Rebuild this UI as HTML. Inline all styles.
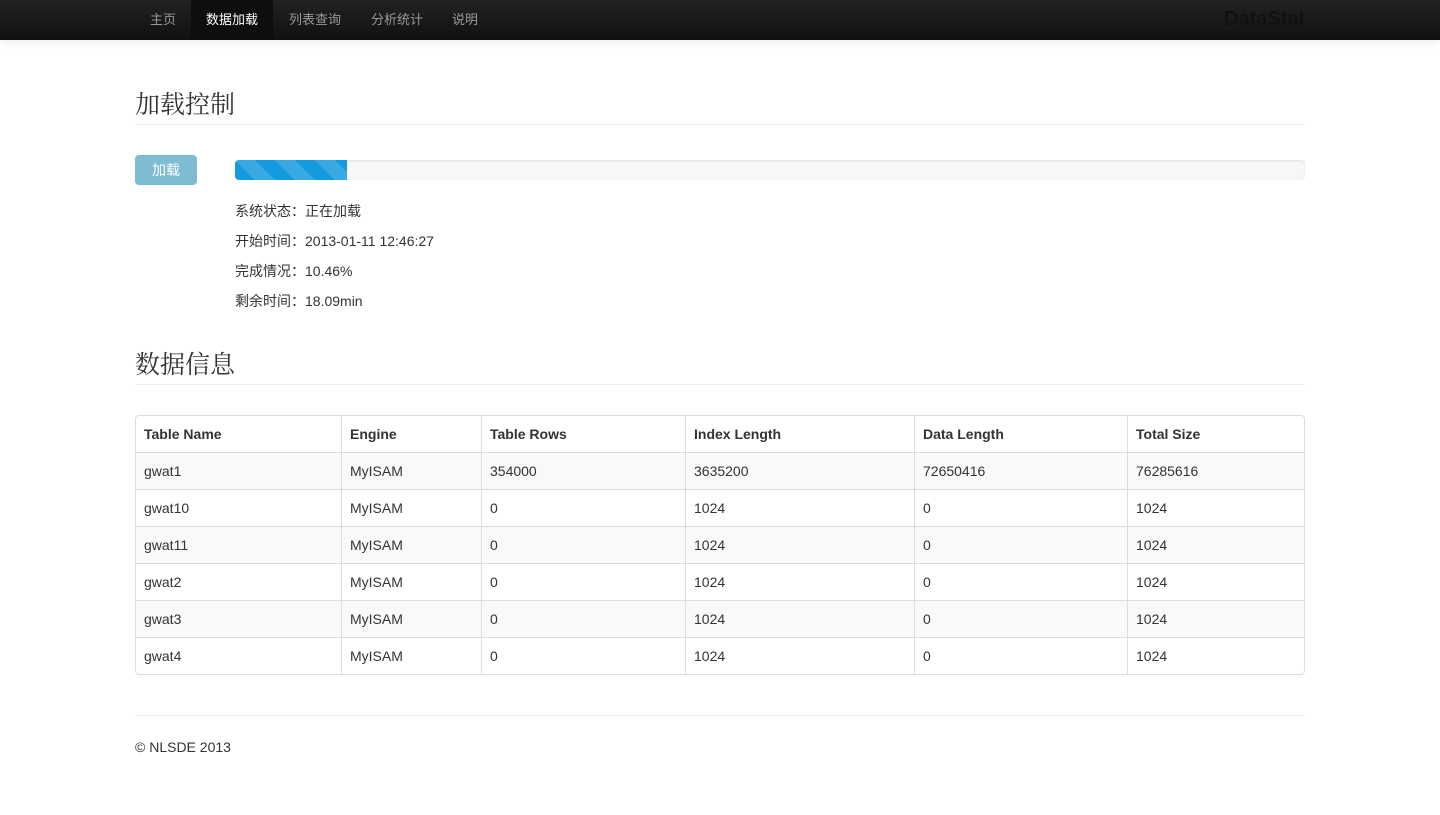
<!DOCTYPE html>
<html><head><meta charset="utf-8"><style>
body{margin:0;font-family:"Liberation Sans","Noto Sans CJK SC",sans-serif;font-size:14px;color:#333;background:#fff;}
.nav{height:40px;background:linear-gradient(#222,#111);box-shadow:0 1px 10px rgba(0,0,0,.1);position:relative;}
.nav a{position:absolute;top:0;height:40px;line-height:40px;color:#999;font-size:13px;text-decoration:none;}
.nav .act{background:#0e0e0e;color:#fff;}
.brand{position:absolute;left:1224px;top:8px;font-size:20px;font-weight:bold;color:#111;}
.c{position:absolute;left:135px;width:1170px;}
h2{margin:0;font-family:"Liberation Serif","Noto Serif CJK SC",serif;font-size:25px;font-weight:normal;}
hr{border:0;border-top:1px solid #eee;margin:0;}
.btn{position:absolute;left:135px;top:155px;width:62px;height:30px;background:#7dbcd2;border-radius:4px;color:#fff;text-align:center;line-height:30px;font-size:14px;border:0;box-sizing:border-box;}
.bar{position:absolute;left:235px;top:160px;width:1070px;height:20px;background:#f7f7f7;border-radius:4px;overflow:hidden;box-shadow:inset 0 1px 2px rgba(0,0,0,.1);}
.bar div{width:112px;height:20px;background-color:#149bdf;background-image:linear-gradient(45deg,rgba(255,255,255,.15) 25%,transparent 25%,transparent 50%,rgba(255,255,255,.15) 50%,rgba(255,255,255,.15) 75%,transparent 75%);background-size:40px 40px;}
.info{position:absolute;left:235px;font-size:14px;}
table{position:absolute;left:135px;top:415px;width:1170px;border-collapse:separate;border-spacing:0;border:1px solid #ddd;border-radius:4px;font-size:14px;}
td,th{height:36px;padding:0 8px;text-align:left;border-top:1px solid #ddd;border-left:1px solid #ddd;}
th{border-top:0;}
td:first-child,th:first-child{border-left:0;}
tr:nth-child(even) td{background:#f9f9f9;}
</style></head><body>
<div class="nav">
<a style="left:135px;padding:0 15px">主页</a>
<a class="act" style="left:191px;padding:0 15px">数据加载</a>
<a style="left:274px;padding:0 15px">列表查询</a>
<a style="left:356px;padding:0 15px">分析统计</a>
<a style="left:437px;padding:0 15px">说明</a>
<div class="brand">DataStat</div>
</div>
<div class="c" style="top:85px"><h2>加载控制</h2></div>
<div class="c" style="top:124px"><hr></div>
<div class="btn">加载</div>
<div class="bar"><div></div></div>
<div class="info" style="top:201px">系统状态：正在加载</div>
<div class="info" style="top:231px">开始时间：2013-01-11 12:46:27</div>
<div class="info" style="top:261px">完成情况：10.46%</div>
<div class="info" style="top:291px">剩余时间：18.09min</div>
<div class="c" style="top:345px"><h2>数据信息</h2></div>
<div class="c" style="top:384px"><hr></div>
<table>
<tr><th style="width:189px">Table Name</th><th style="width:123px">Engine</th><th style="width:187px">Table Rows</th><th style="width:212px">Index Length</th><th style="width:196px">Data Length</th><th>Total Size</th></tr>
<tr><td>gwat1</td><td>MyISAM</td><td>354000</td><td>3635200</td><td>72650416</td><td>76285616</td></tr>
<tr><td>gwat10</td><td>MyISAM</td><td>0</td><td>1024</td><td>0</td><td>1024</td></tr>
<tr><td>gwat11</td><td>MyISAM</td><td>0</td><td>1024</td><td>0</td><td>1024</td></tr>
<tr><td>gwat2</td><td>MyISAM</td><td>0</td><td>1024</td><td>0</td><td>1024</td></tr>
<tr><td>gwat3</td><td>MyISAM</td><td>0</td><td>1024</td><td>0</td><td>1024</td></tr>
<tr><td>gwat4</td><td>MyISAM</td><td>0</td><td>1024</td><td>0</td><td>1024</td></tr>
</table>
<div class="c" style="top:715px"><hr></div>
<div class="c" style="top:739px">© NLSDE 2013</div>
</body></html>
